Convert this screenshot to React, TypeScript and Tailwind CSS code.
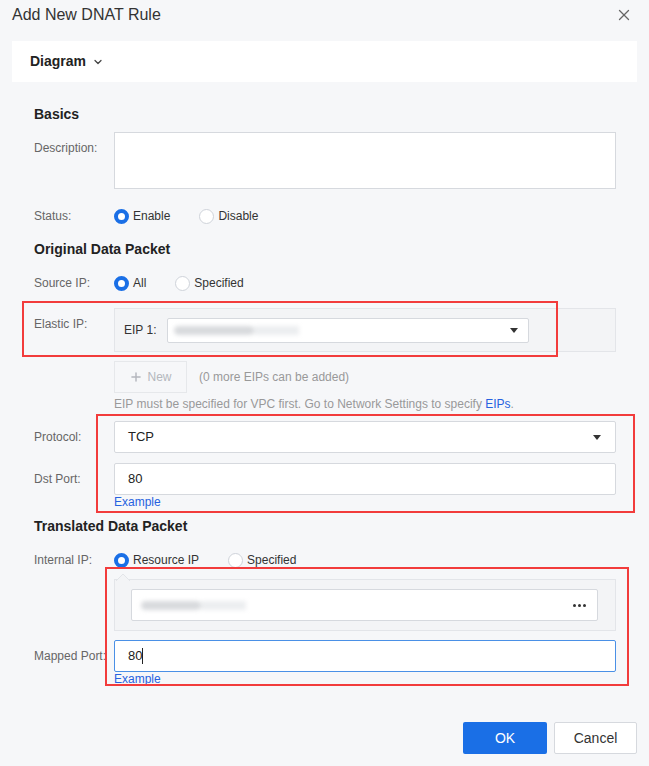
import { ChevronDown, Plus, X } from "lucide-react";

function Radio({ label, checked, last }: { label: string; checked?: boolean; last?: boolean }) {
  return (
    <label className={"flex items-center " + (last ? "" : "mr-[29px]")}>
      {checked ? (
        <span className="w-[15px] h-[15px] rounded-full border-[4px] border-[#1a6fe6] bg-white" />
      ) : (
        <span className="w-[15px] h-[15px] rounded-full border border-[#cfd3da] bg-white" />
      )}
      <span className="ml-[4px] text-[12px] text-[#333]">{label}</span>
    </label>
  );
}

function Caret() {
  return (
    <svg width="8" height="5" viewBox="0 0 8 5" className="text-[#333]">
      <path d="M0 0h8L4 5z" fill="currentColor" />
    </svg>
  );
}

function Blur({ w }: { w: string }) {
  return (
    <div className="flex items-center blur-[2px]">
      <span className={"h-[9px] rounded-full bg-[#d8dadd] " + w} />
      <span className="h-[9px] w-[45px] bg-[#eceef0]" />
    </div>
  );
}

export default function App() {
  return (
    <div className="relative w-[649px] h-[766px] bg-[#f6f7f9] font-['Liberation_Sans',Arial,sans-serif] text-[#333] overflow-hidden">
      {/* header */}
      <div className="flex items-center justify-between h-[30px] pl-3 pr-[16px]">
        <h1 className="text-[16px] text-[#333]">Add New DNAT Rule</h1>
        <X className="w-[18px] h-[18px] text-[#666]" strokeWidth={1.7} />
      </div>

      <div className="mx-3 mt-[11px] h-[41px] bg-white flex items-center px-[18px]">
        <span className="text-[14px] font-bold text-[#222]">Diagram</span>
        <ChevronDown className="ml-[6px] w-[12px] h-[12px] text-[#444]" strokeWidth={2.5} />
      </div>

      <div className="pl-[34px]">
        <div className="mt-[22px] h-5 flex items-center text-[14px] font-bold text-[#222]">Basics</div>

        <div className="mt-2 flex">
          <div className="w-[80px] pt-[9px] text-[12px] leading-[14px] text-[#666]">Description:</div>
          <div className="w-[502px] h-[57px] bg-white border border-[#d6d9de]" />
        </div>

        <div className="mt-[17px] flex items-center h-5">
          <div className="w-[80px] text-[12px] text-[#666]">Status:</div>
          <Radio label="Enable" checked />
          <Radio label="Disable" last />
        </div>

        <div className="mt-[13px] h-5 flex items-center text-[14px] font-bold text-[#222]">Original Data Packet</div>

        <div className="mt-[14px] flex items-center h-5">
          <div className="w-[80px] text-[12px] text-[#666]">Source IP:</div>
          <Radio label="All" checked />
          <Radio label="Specified" last />
        </div>

        <div className="mt-[15px] flex">
          <div className="w-[80px] pt-[9px] text-[12px] leading-[14px] text-[#666]">Elastic IP:</div>
          <div className="w-[502px] h-[44px] bg-[#f3f4f6] border border-[#e3e5e9] pt-[9px] pl-[9px] flex items-start">
            <span className="text-[12px] text-[#333] leading-[24px] w-[43px]">EIP 1:</span>
            <div className="w-[362px] h-[25px] bg-white border border-[#d6d9de] rounded-[2px] flex items-center justify-between pl-[6px] pr-[10px]">
              <Blur w="w-[80px]" />
              <Caret />
            </div>
          </div>
        </div>

        <div className="mt-[9px] ml-[80px] flex items-center">
          <div className="w-[73px] h-[32px] bg-[#f6f7f9] border border-[#e6e8eb] flex items-center justify-center gap-[4px] text-[12px] text-[#b4b7bd]">
            <Plus className="w-[14px] h-[14px]" strokeWidth={2.5} />
            New
          </div>
          <span className="ml-[12px] text-[12px] text-[#999]">(0 more EIPs can be added)</span>
        </div>

        <div className="mt-[3px] ml-[80px] h-4 flex items-center text-[12px] text-[#999]">
          EIP must be specified for VPC first. Go to Network Settings to specify&nbsp;
          <span className="text-[#2662e0]">EIPs</span>.
        </div>

        <div className="mt-[9px] flex items-center">
          <div className="w-[80px] text-[12px] text-[#666]">Protocol:</div>
          <div className="w-[502px] h-[32px] bg-white border border-[#d6d9de] rounded-[2px] flex items-center justify-between pl-[13px] pr-[14px]">
            <span className="text-[13px] text-[#222]">TCP</span>
            <Caret />
          </div>
        </div>

        <div className="mt-[10px] flex items-center">
          <div className="w-[80px] text-[12px] text-[#666]">Dst Port:</div>
          <div className="w-[502px] h-[32px] bg-white border border-[#d6d9de] rounded-[2px] flex items-center pl-[13px]">
            <span className="text-[13px] text-[#222]">80</span>
          </div>
        </div>
        <div className="ml-[80px] text-[12px] leading-[14px] text-[#2662e0]">Example</div>

        <div className="mt-[7px] h-5 flex items-center text-[14px] font-bold text-[#222]">Translated Data Packet</div>

        <div className="mt-[14px] flex items-center h-5">
          <div className="w-[80px] text-[12px] text-[#666]">Internal IP:</div>
          <Radio label="Resource IP" checked />
          <Radio label="Specified" last />
        </div>

        <div className="mt-[9px] ml-[80px] relative w-[502px] h-[52px] bg-[#f3f4f6] border border-[#e3e5e9] pt-[9px] pl-[16px] pr-[17px]">
          <svg width="14" height="8" viewBox="0 0 14 8" className="absolute -top-[7px] left-[1px]">
            <path d="M0 8L7 1L14 8" fill="#f3f4f6" stroke="#e3e5e9" />
          </svg>
          <div className="h-[32px] bg-white border border-[#d6d9de] rounded-[2px] flex items-center justify-between pl-[9px] pr-[11px]">
            <Blur w="w-[60px]" />
            <div className="flex items-center gap-[2px]">
              <span className="w-[3px] h-[3px] rounded-full bg-[#333]" />
              <span className="w-[3px] h-[3px] rounded-full bg-[#333]" />
              <span className="w-[3px] h-[3px] rounded-full bg-[#333]" />
            </div>
          </div>
        </div>

        <div className="mt-[9px] flex items-center">
          <div className="w-[80px] text-[12px] text-[#666] whitespace-nowrap">Mapped Port:</div>
          <div className="w-[502px] h-[32px] bg-white border border-[#4a90e6] rounded-[2px] flex items-center pl-[13px]">
            <span className="text-[13px] text-[#222]">80</span>
            <span className="w-px h-[16px] bg-[#222]" />
          </div>
        </div>
        <div className="ml-[80px] text-[12px] leading-[14px] text-[#2662e0]">Example</div>
      </div>

      <div className="mt-[36px] pr-3 flex justify-end gap-[7px]">
        <button className="w-[84px] h-[32px] bg-[#1a6fe6] rounded-[2px] text-white text-[14px]">OK</button>
        <button className="w-[83px] h-[32px] bg-white border border-[#d6d9de] rounded-[2px] text-[#333] text-[14px]">Cancel</button>
      </div>

      {/* annotation boxes */}
      <div className="absolute left-[22px] top-[301px] w-[536px] h-[56px] border-2 border-[#f23c3c] pointer-events-none" />
      <div className="absolute left-[96px] top-[414px] w-[539px] h-[99px] border-2 border-[#f23c3c] pointer-events-none" />
      <div className="absolute left-[105px] top-[567px] w-[524px] h-[119px] border-2 border-[#f23c3c] pointer-events-none" />
    </div>
  );
}
